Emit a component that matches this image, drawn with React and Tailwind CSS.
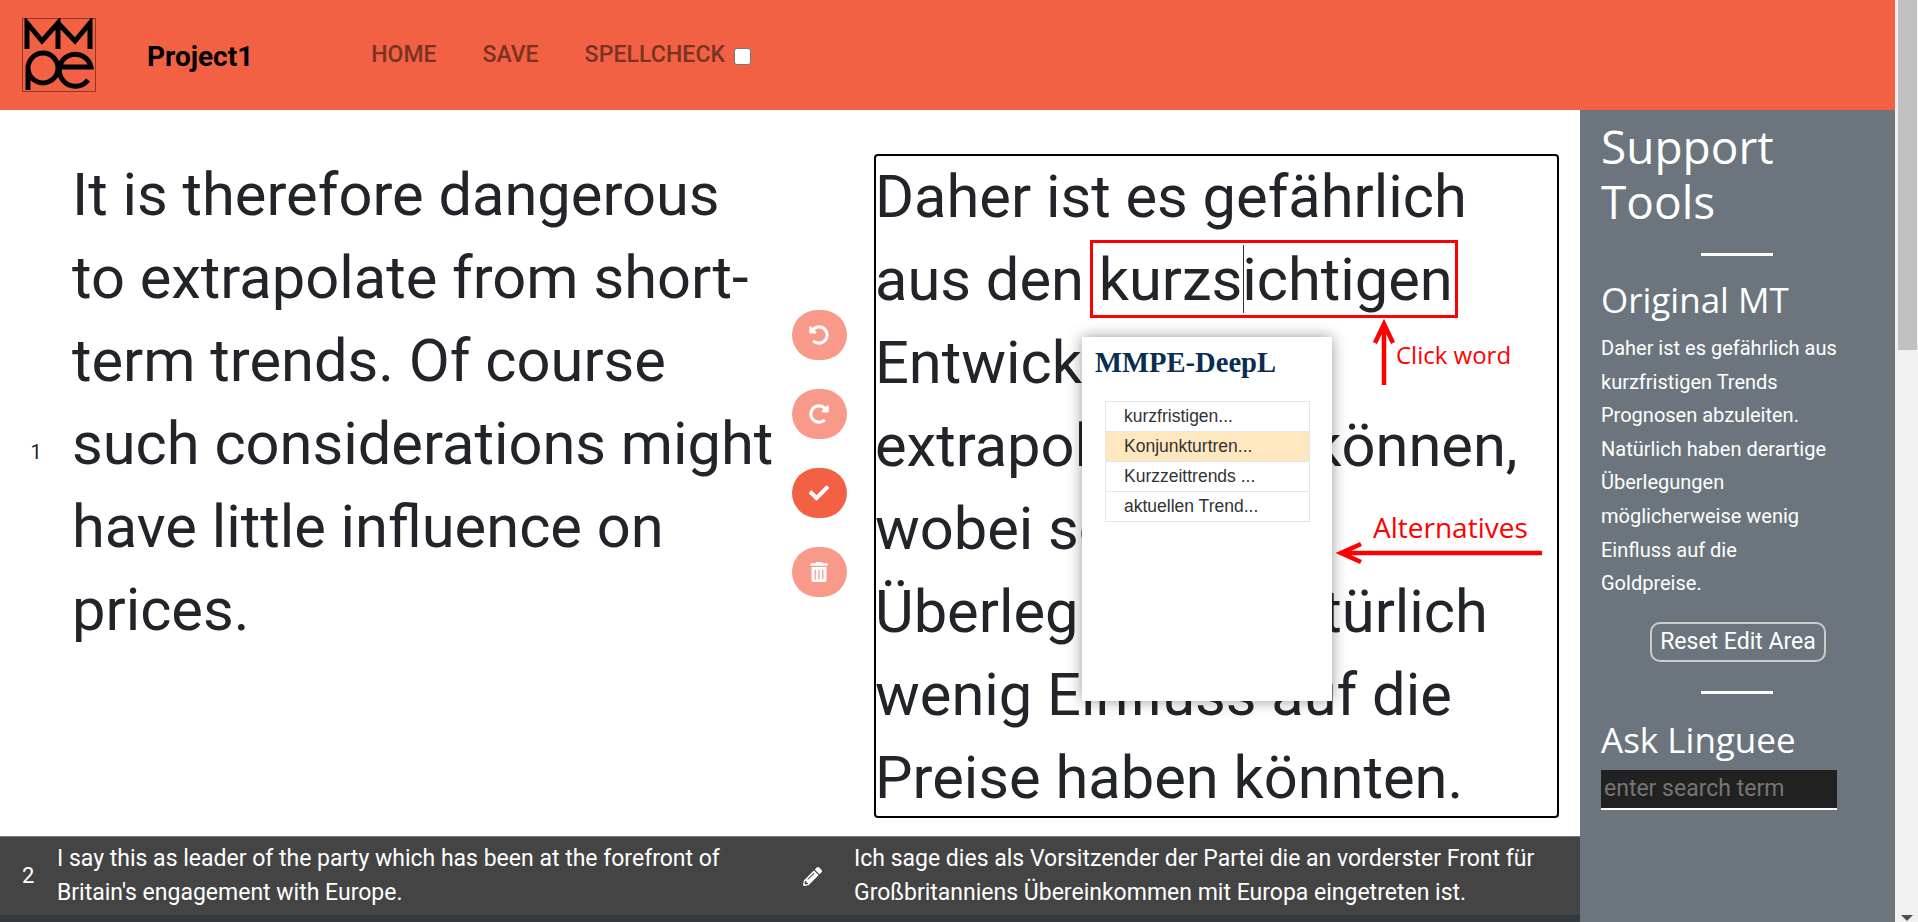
import { FaUndoAlt, FaRedoAlt, FaCheck, FaTrashAlt, FaPencilAlt } from "react-icons/fa";

const roboto = "font-['Roboto',sans-serif]";
const openSans = "font-['Open_Sans',sans-serif]";

const actions = [
  { icon: FaUndoAlt, active: false },
  { icon: FaRedoAlt, active: false },
  { icon: FaCheck, active: true },
  { icon: FaTrashAlt, active: false },
];

const targetLines = [
  "Daher ist es gefährlich",
  "aus den kurzsichtigen",
  "Entwicklungen",
  "extrapolieren zu können,",
  "wobei solche",
  "Überlegungen natürlich",
  "wenig Einfluss auf die",
  "Preise haben könnten.",
];

const alternatives = ["kurzfristigen...", "Konjunkturtren...", "Kurzzeittrends ...", "aktuellen Trend..."];

function Logo() {
  return (
    <svg viewBox="0 0 74 74" className="h-[74px] w-[74px] shrink-0">
      <rect x="0.5" y="0.5" width="73" height="73" fill="none" stroke="#8a3a26" />
      <path
        d="M5 31V5L20 23L36 5V31M36 5L53 23L68 5V31"
        fill="none"
        stroke="#000"
        strokeWidth="5"
      />
      <path d="M6 72V50a15 15 0 1 1 15 15a15 15 0 0 1-15-15" fill="none" stroke="#000" strokeWidth="5" />
      <path d="M38 49H69a16 16 0 1 0-3 13" fill="none" stroke="#000" strokeWidth="5" />
    </svg>
  );
}

function Header() {
  return (
    <header className="flex h-[110px] shrink-0 items-center bg-[#f26144] pl-[22px]">
      <Logo />
      <span className={`${roboto} ml-[51px] mt-[3px] text-[28px] font-bold text-black`}>Project1</span>
      <nav className={`${roboto} ml-[118px] mt-[1px] flex items-center gap-[46px] text-[23px] font-medium text-[#7a3322]`}>
        <span>HOME</span>
        <span>SAVE</span>
        <span className="flex items-center gap-[9px]">
          <span className="tracking-[0.1px]">SPELLCHECK</span>
          <input type="checkbox" className="mt-[1px] h-[17px] w-[17px] appearance-none rounded-[3px] border border-[#777] bg-white" />
        </span>
      </nav>
    </header>
  );
}

function Annotations() {
  return (
    <>
      {/* red frame round the clicked word */}
      <div className="absolute left-[214px] top-[84px] h-[78px] w-[368px] border-[3px] border-[#ff0000]" />
      <div className="absolute left-[367px] top-[89px] h-[68px] w-px bg-[#333]" />
      <svg className="absolute left-[496px] top-[163px]" width="24" height="66" viewBox="0 0 24 66">
        <path d="M12 66V5M3 24L12 5L21 24" fill="none" stroke="#ff0000" strokeWidth="4.5" />
      </svg>
      <span className={`${openSans} absolute left-[520px] top-[183px] text-[24px] leading-[32px] text-[#ff0000]`}>Click word</span>
      <span className={`${openSans} absolute left-[497px] top-[353px] text-[28px] leading-[36px] text-[#ff0000]`}>Alternatives</span>
      <svg className="absolute left-[460px] top-[382px]" width="206" height="30" viewBox="0 0 206 30">
        <path d="M206 15H5M25 6L5 15L25 24" fill="none" stroke="#ff0000" strokeWidth="4.5" />
      </svg>
    </>
  );
}

function Popup() {
  return (
    <div className="absolute left-[206px] top-[181px] h-[364px] w-[250px] bg-white px-[13px] pt-[10px] shadow-[0_0_14px_rgba(0,0,0,0.4)]">
      <h3 className="font-['Liberation_Serif',serif] text-[28.6px] font-bold leading-[32px] text-[#0b2d52]">MMPE-DeepL</h3>
      <ul className="mt-[23px] ml-[10px] w-[205px] font-['Liberation_Sans',sans-serif] text-[17.5px] text-[#333]">
        {alternatives.map((alt, i) => (
          <li
            key={alt}
            className={`-mt-px flex h-[31px] items-center border border-[#e6e6e6] pl-[18px] ${i === 1 ? "bg-[#ffe8c0]" : "bg-white"}`}
          >
            {alt}
          </li>
        ))}
      </ul>
    </div>
  );
}

function ActiveRow() {
  return (
    <div className="flex min-h-0 flex-1 pt-[44px]">
      <div className={`${roboto} flex h-[600px] w-[72px] shrink-0 items-center justify-center pb-[4px] text-[20px] text-[#212529]`}>1</div>
      <p className={`${roboto} h-[600px] w-[715px] shrink-0 text-[59.6px] leading-[83px] text-[#212529]`}>
        It is therefore dangerous to extrapolate from short-term trends. Of course such considerations might have little influence on prices.
      </p>
      <div className="flex w-[87px] shrink-0 flex-col items-center gap-[29px] pr-[23px] pt-[156px]">
        {actions.map(({ icon: Icon, active }, i) => (
          <button
            key={i}
            className={`flex h-[50px] w-[55px] items-center justify-center rounded-full text-[20px] text-white ${active ? "bg-[#f26144]" : "bg-[#f8998a]"}`}
          >
            <Icon />
          </button>
        ))}
      </div>
      <div className={`${roboto} relative h-[664px] w-[685px] shrink-0 rounded-[4px] border-2 border-black text-[59.6px] leading-[83px] text-[#212529]`}>
        {targetLines.map((line) => (
          <div key={line} className="-ml-px whitespace-nowrap">
            {line}
          </div>
        ))}
        <Popup />
        <Annotations />
      </div>
    </div>
  );
}

function NextRow() {
  return (
    <div className={`${roboto} flex h-[79px] shrink-0 items-center border-t border-[#777] bg-[#444444] text-[23px] leading-[34px] text-white`}>
      <span className="w-[57px] shrink-0 pl-[22px] text-[22px]">2</span>
      <p className="w-[736px] shrink-0">
        I say this as leader of the party which has been at the forefront of Britain's engagement with Europe.
      </p>
      <span className="flex w-[61px] shrink-0 justify-center pr-[22px] text-[19px]">
        <FaPencilAlt />
      </span>
      <p className="w-[700px] shrink-0">
        Ich sage dies als Vorsitzender der Partei die an vorderster Front für Großbritanniens Übereinkommen mit Europa eingetreten ist.
      </p>
    </div>
  );
}

function Sidebar() {
  return (
    <aside className="flex w-[315px] shrink-0 flex-col bg-[#6c757d] pl-[21px] pr-[21px] text-white">
      <h2 className={`${openSans} mt-[9px] text-[46px] leading-[55px]`}>Support Tools</h2>
      <div className="mt-[24px] ml-[100px] h-[3px] w-[72px] bg-white" />
      <h3 className={`${openSans} mt-[22px] text-[35px] leading-[44px]`}>Original MT</h3>
      <p className={`${roboto} mt-[10px] text-[20px] leading-[33.6px]`}>
        Daher ist es gefährlich aus kurzfristigen Trends Prognosen abzuleiten. Natürlich haben derartige Überlegungen<br />
        möglicherweise wenig<br />
        Einfluss auf die<br />
        Goldpreise.
      </p>
      <button className={`${roboto} mt-[21px] ml-[49px] h-[40px] w-[176px] rounded-[10px] border-2 border-[#ccc] text-[23px] leading-[28px]`}>
        Reset Edit Area
      </button>
      <div className="mt-[29px] ml-[100px] h-[3px] w-[72px] bg-white" />
      <h3 className={`${openSans} mt-[24px] text-[35px] leading-[44px]`}>Ask Linguee</h3>
      <input
        placeholder="enter search term"
        className={`${roboto} mt-[8px] h-[40px] w-[236px] border-b-2 border-white bg-[#212121] px-[3px] text-[23px] placeholder:text-[#757575]`}
      />
    </aside>
  );
}

function Scrollbar() {
  return (
    <div className="relative flex w-[23px] shrink-0 flex-col items-end bg-[#f1f1f1]">
      <div className="mr-[1px] h-[350px] w-[19px] bg-[#c1c1c1]" />
      <div className="mr-[5px] mt-auto mb-[1px] h-0 w-0 border-x-[6px] border-t-[6px] border-x-transparent border-t-[#505050]" />
    </div>
  );
}

export default function App() {
  return (
    <div className="flex h-[922px] w-full overflow-hidden bg-white">
      <div className="flex min-w-0 flex-1 flex-col">
        <Header />
        <div className="flex min-h-0 flex-1">
          <main className="flex min-w-0 flex-1 flex-col">
            <ActiveRow />
            <NextRow />
            <div className="h-[7px] shrink-0 bg-[#343a40]" />
          </main>
          <Sidebar />
        </div>
      </div>
      <Scrollbar />
    </div>
  );
}
